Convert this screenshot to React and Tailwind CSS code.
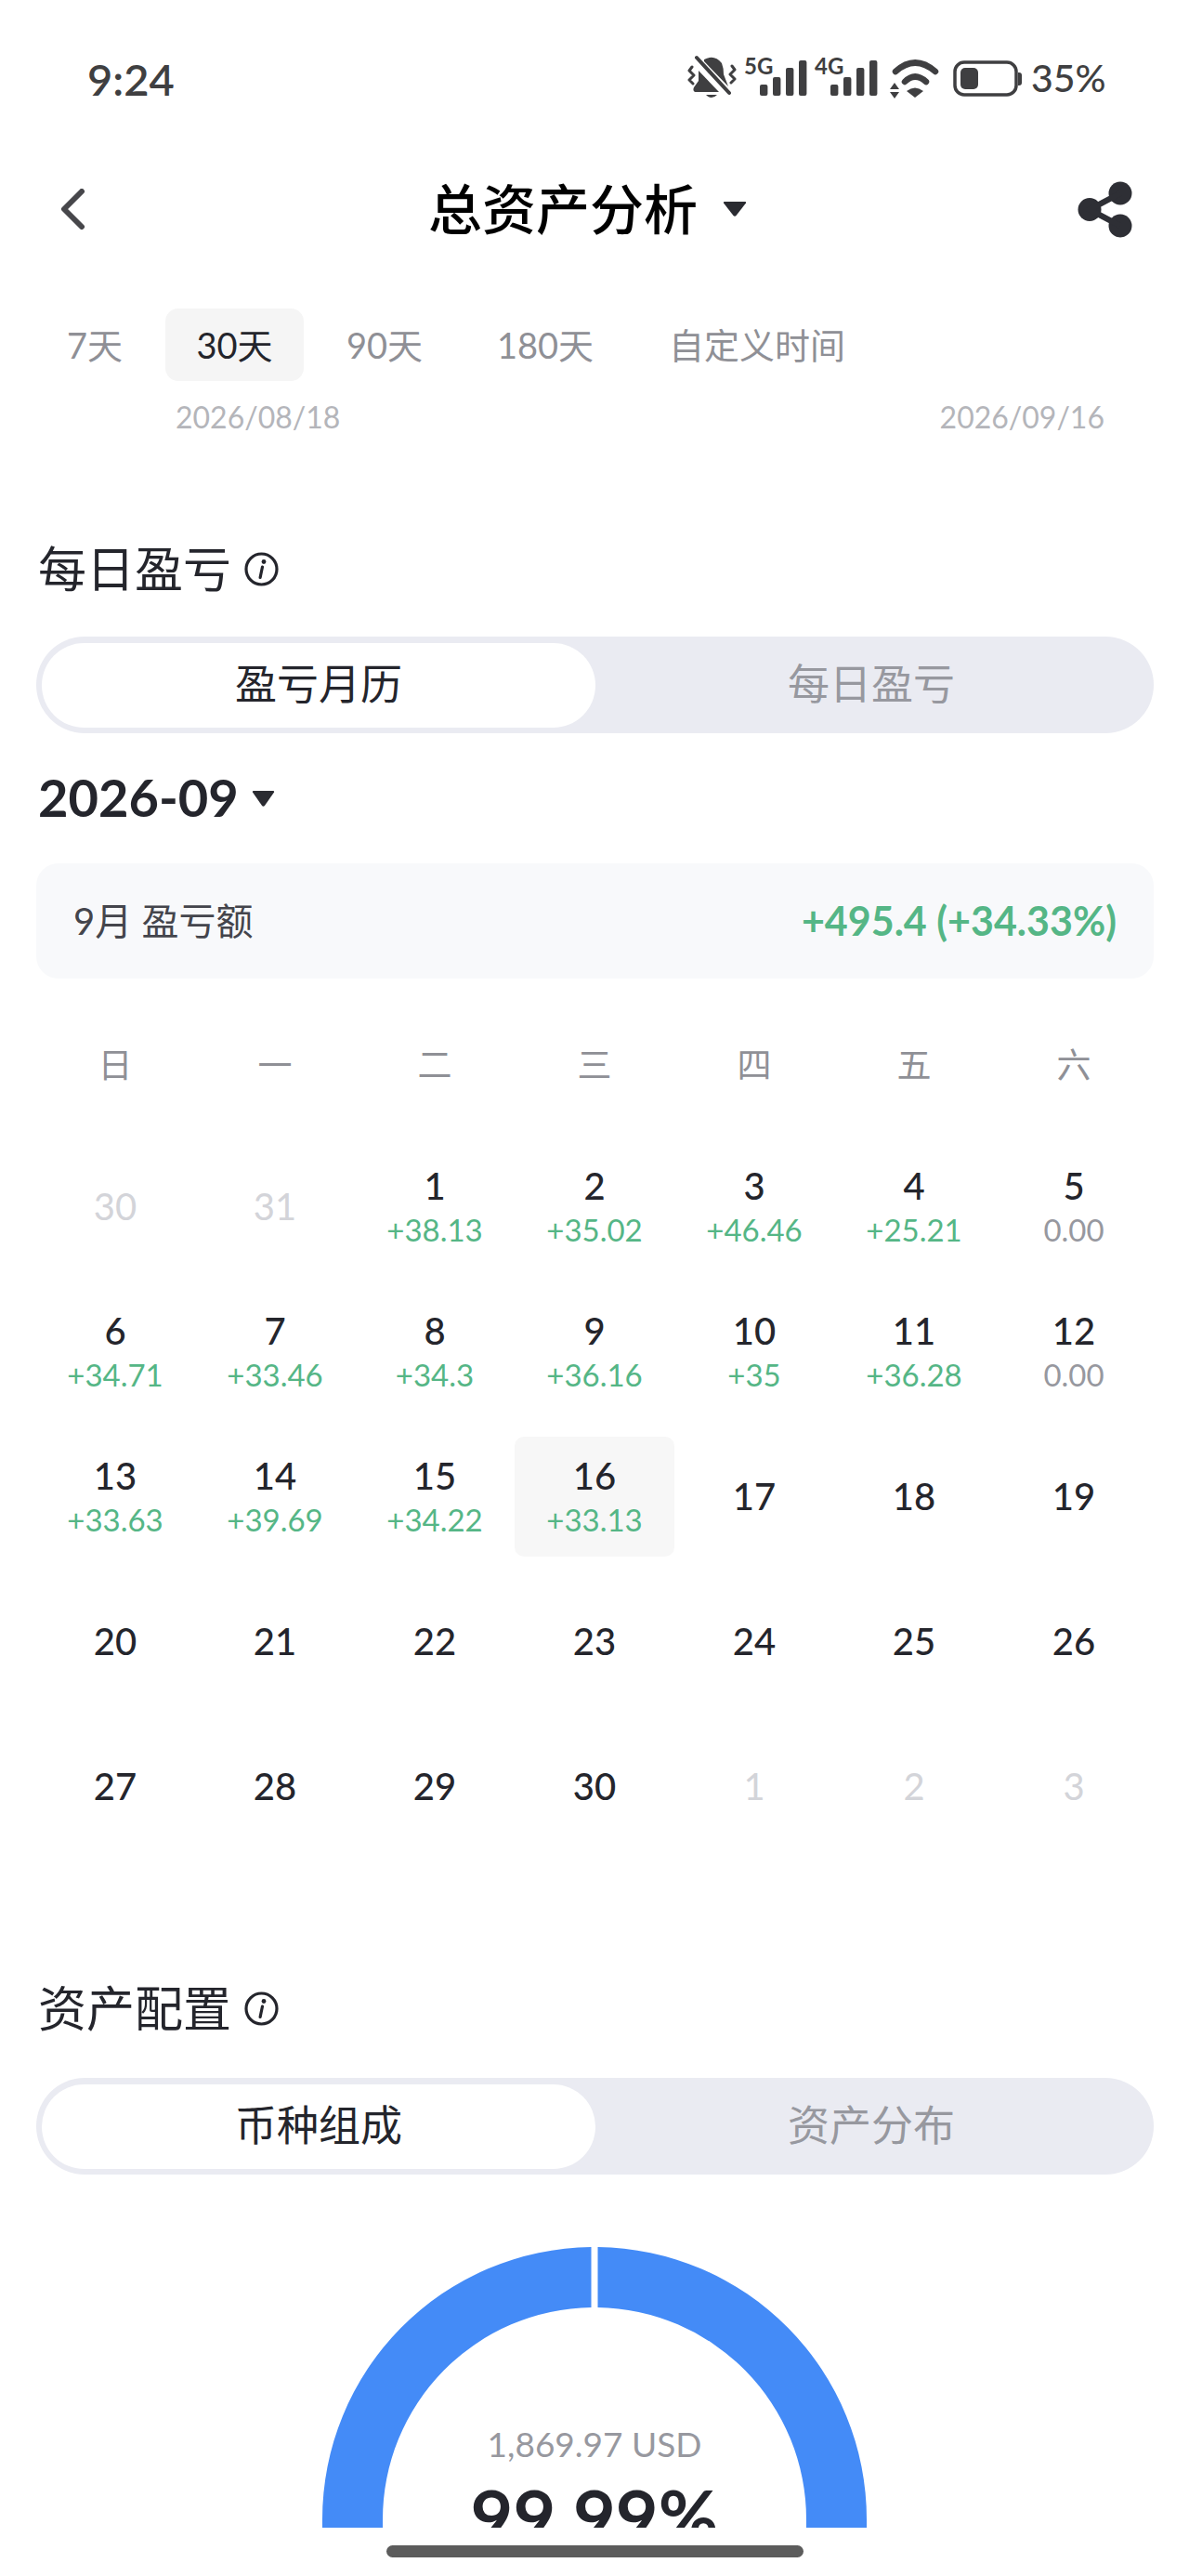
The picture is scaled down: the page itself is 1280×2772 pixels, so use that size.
import React from "react";

const F = { fontFamily: 'Lato, "Noto Sans CJK SC", sans-serif' };

function Info() {
  return (
    <svg width="37" height="39" viewBox="0 0 37 39" fill="none" className="ml-[14px] shrink-0">
      <circle cx="18.5" cy="19.5" r="16.5" stroke="#24252c" strokeWidth="3.2" />
      <circle cx="21" cy="11.5" r="2.4" fill="#24252c" />
      <path d="M19.5 17l-2.4 11.5" stroke="#24252c" strokeWidth="3.2" strokeLinecap="round" />
    </svg>
  );
}

function Tri({ w, h, c = "#2a2b31" }) {
  return (
    <svg width={w} height={h} viewBox="0 0 26 16" preserveAspectRatio="none" className="shrink-0">
      <path d="M1 1.5Q0.5 0 2 0H24Q25.5 0 25 1.5L14.5 15Q13 16.5 11.5 15Z" fill={c} />
    </svg>
  );
}

function Section({ title }) {
  return (
    <div className="flex items-center h-[60px] pl-[41px] text-[52px] leading-[60px] text-[#24252c]">
      <span>{title}</span>
      <Info />
    </div>
  );
}

function Segment({ a, b }) {
  return (
    <div className="mx-[39px] w-[1203px] h-[104px] rounded-[52px] bg-[#eaebf2] flex items-center p-[7px] pl-[6px]">
      <div className="w-[596px] h-[91px] rounded-[46px] bg-white flex items-center justify-center text-[45px] text-[#24252c]">{a}</div>
      <div className="flex-1 flex items-center justify-center text-[45px] text-[#97989f]">{b}</div>
    </div>
  );
}

const weeks = [
  [["30", "", 1], ["31", "", 1], ["1", "+38.13"], ["2", "+35.02"], ["3", "+46.46"], ["4", "+25.21"], ["5", "0.00"]],
  [["6", "+34.71"], ["7", "+33.46"], ["8", "+34.3"], ["9", "+36.16"], ["10", "+35"], ["11", "+36.28"], ["12", "0.00"]],
  [["13", "+33.63"], ["14", "+39.69"], ["15", "+34.22"], ["16", "+33.13", 0, 1], ["17", ""], ["18", ""], ["19", ""]],
  [["20", ""], ["21", ""], ["22", ""], ["23", ""], ["24", ""], ["25", ""], ["26", ""]],
  [["27", ""], ["28", ""], ["29", ""], ["30", ""], ["1", "", 1], ["2", "", 1], ["3", "", 1]],
];

function Day({ d }) {
  const [n, sub, muted, sel] = d;
  return (
    <div className="h-[156px] flex items-center justify-center">
      <div className={"w-[172px] h-[129px] flex flex-col items-center justify-center rounded-[10px] " + (sel ? "bg-[#f7f7f7]" : "")}>
        <div className={"text-[40px] leading-[46px] " + (muted ? "text-[#d3d4d9]" : "text-[#24252c] font-medium")}>{n}</div>
        {sub ? (
          <div className={"text-[33px] leading-[40px] mt-[4px] " + (sub === "0.00" ? "text-[#97989f]" : "text-[#55b686]")}>{sub}</div>
        ) : null}
      </div>
    </div>
  );
}

function StatusIcons() {
  const c = "#3f3f41";
  const bars = (x) => (
    <g fill={c} key={x}>
      <rect x={x} y="91" width="8.4" height="12" rx="2" />
      <rect x={x + 14} y="83" width="8.4" height="20" rx="2" />
      <rect x={x + 28} y="73" width="8.4" height="30" rx="2" />
      <rect x={x + 42} y="65" width="8.4" height="38" rx="2" />
    </g>
  );
  return (
    <svg width="370" height="60" viewBox="735 55 370 60" fill="none" className="block">
      <path d="M758 64Q769 58 777 68Q779 73 779 80L784 93L758 66ZM752 76V87L747 94Q745 99 750 99H774L752 76Z" fill={c} />
      <path d="M750 62L785 100" stroke={c} strokeWidth="4" strokeLinecap="round" />
      <path d="M760 102H772Q766 108 760 102Z" fill={c} />
      <path d="M745 72L742 76L747 81L742 86L746 90M788 71L791 75L786 80L791 85L787 89" stroke={c} strokeWidth="3" strokeLinecap="round" strokeLinejoin="round" />
      {bars(818)}
      {bars(894)}
      <path d="M964 77Q985 58 1007 77" stroke={c} strokeWidth="6.5" strokeLinecap="round" />
      <path d="M974 88Q985 77 997 88" stroke={c} strokeWidth="6.5" strokeLinecap="round" />
      <path d="M976 98Q985 91 994 98L985 105Z" fill={c} />
      <path d="M963 89L968 96H958ZM963 106L958 99H968Z" fill={c} />
      <rect x="1028" y="67" width="66" height="35" rx="10" stroke={c} strokeWidth="3.5" />
      <rect x="1034" y="73" width="19" height="23" rx="5" fill={c} />
      <path d="M1096 78H1097Q1100 78 1100 81V89Q1100 92 1097 92H1096Z" fill={c} />
    </svg>
  );
}

export default function App() {
  return (
    <div className="relative w-[1280px] h-[2772px] bg-white overflow-hidden" style={F}>
      <div className="relative h-[170px] flex items-center justify-between pl-[94px] pr-[95px] text-[#3f3f41]">
        <span className="text-[47px] font-semibold leading-none">9:24</span>
        <div className="relative w-[450px] h-[60px]">
          <div className="absolute left-[0px] top-0"><StatusIcons /></div>
          <span className="absolute left-[66px] top-[4px] text-[24px] font-bold leading-[24px]">5G</span>
          <span className="absolute left-[142px] top-[4px] text-[24px] font-bold leading-[24px]">4G</span>
          <span className="absolute left-[375px] top-[4px] text-[41px] leading-[50px] font-medium">35%</span>
        </div>
      </div>

      <div className="relative h-[110px] flex items-center justify-between pl-[63px] pr-[61px]">
        <svg width="30" height="44" viewBox="0 0 30 44" fill="none">
          <path d="M25 3L6 22L25 41" stroke="#47474b" strokeWidth="6" strokeLinecap="round" strokeLinejoin="round" />
        </svg>
        <div className="flex items-center text-[58px] leading-[70px] font-medium text-black pl-[12px]">
          <span>总资产分析</span>
          <span className="ml-[27px]"><Tri w={26} h={16} /></span>
        </div>
        <svg width="59" height="61" viewBox="0 0 59 61" fill="#2e2f35">
          <circle cx="46" cy="13" r="12.5" />
          <circle cx="46" cy="48" r="12.5" />
          <circle cx="13" cy="30.5" r="12.5" />
          <path d="M46 13L13 30.5L46 48" fill="none" stroke="#2e2f35" strokeWidth="6.5" />
        </svg>
      </div>

      <div className="flex items-center h-[78px] mt-[52px] pl-[72px] text-[38px] text-[#8f9096]">
        <span className="w-[106px]">7天</span>
        <span className="w-[149px] h-[78px] rounded-[14px] bg-[#f5f5f5] text-[#24252c] flex items-center justify-center">30天</span>
        <span className="ml-[46px] w-[162px]">90天</span>
        <span className="w-[185px]">180天</span>
        <span>自定义时间</span>
      </div>
      <div className="h-[40px] mt-[19px] pl-[189px] pr-[91px] flex items-center justify-between text-[32px] leading-[40px] text-[#b4b5ba]">
        <span>2026/08/18</span>
        <span>2026/09/16</span>
      </div>

      <div className="mt-[113px]"><Section title="每日盈亏" /></div>
      <div className="mt-[43px]"><Segment a="盈亏月历" b="每日盈亏" /></div>

      <div className="mt-[39px] h-[60px] pl-[41px] flex items-center text-[56px] leading-[60px] font-bold text-[#24252c]">
        <span>2026-09</span>
        <span className="ml-[14px] mt-[2px]"><Tri w={25} h={17} /></span>
      </div>

      <div className="mt-[41px] mx-[39px] w-[1203px] h-[124px] rounded-[24px] bg-[#f8f9fb] flex items-center justify-between pl-[40px] pr-[40px]">
        <span className="text-[40px] text-[#44454c]">9月 盈亏额</span>
        <span className="text-[43px] font-bold text-[#55b686]">+495.4 (+34.33%)</span>
      </div>

      <div className="mt-[65px] mb-[52px] ml-[38px] w-[1204px] grid grid-cols-7 h-[50px] items-center text-center text-[37px] text-[#8f9096]">
        {["日", "一", "二", "三", "四", "五", "六"].map((w) => (
          <span key={w}>{w}</span>
        ))}
      </div>

      <div className="ml-[38px] w-[1204px] grid grid-cols-7">
        {weeks.flat().map((d, i) => (
          <Day d={d} key={i} />
        ))}
      </div>

      <div className="mt-[131px]"><Section title="资产配置" /></div>
      <div className="mt-[45px]"><Segment a="币种组成" b="资产分布" /></div>

      <div className="relative mt-[78px] mx-auto w-[586px] h-[302px] overflow-hidden">
        <svg width="586" height="302" viewBox="0 0 586 302" className="block">
          <path d="M0 302V293A293 293 0 0 1 289.5 0V65A228 228 0 0 0 65 293V302Z" fill="#448bf7" />
          <path d="M586 302V293A293 293 0 0 0 296.5 0V65A228 228 0 0 1 521 293V302Z" fill="#448bf7" />
        </svg>
        <div className="absolute left-0 right-0 top-[190px] text-center text-[37px] leading-[44px] text-[#97989f]">1,869.97 USD</div>
        <div className="absolute left-0 right-0 top-[244px] text-center text-[79px] leading-[90px] font-bold text-[#24252c]">99.99%</div>
      </div>

      <div className="absolute left-[416px] top-[2739px] w-[449px] h-[13px] rounded-full bg-[#5c5c5c]" />
    </div>
  );
}
